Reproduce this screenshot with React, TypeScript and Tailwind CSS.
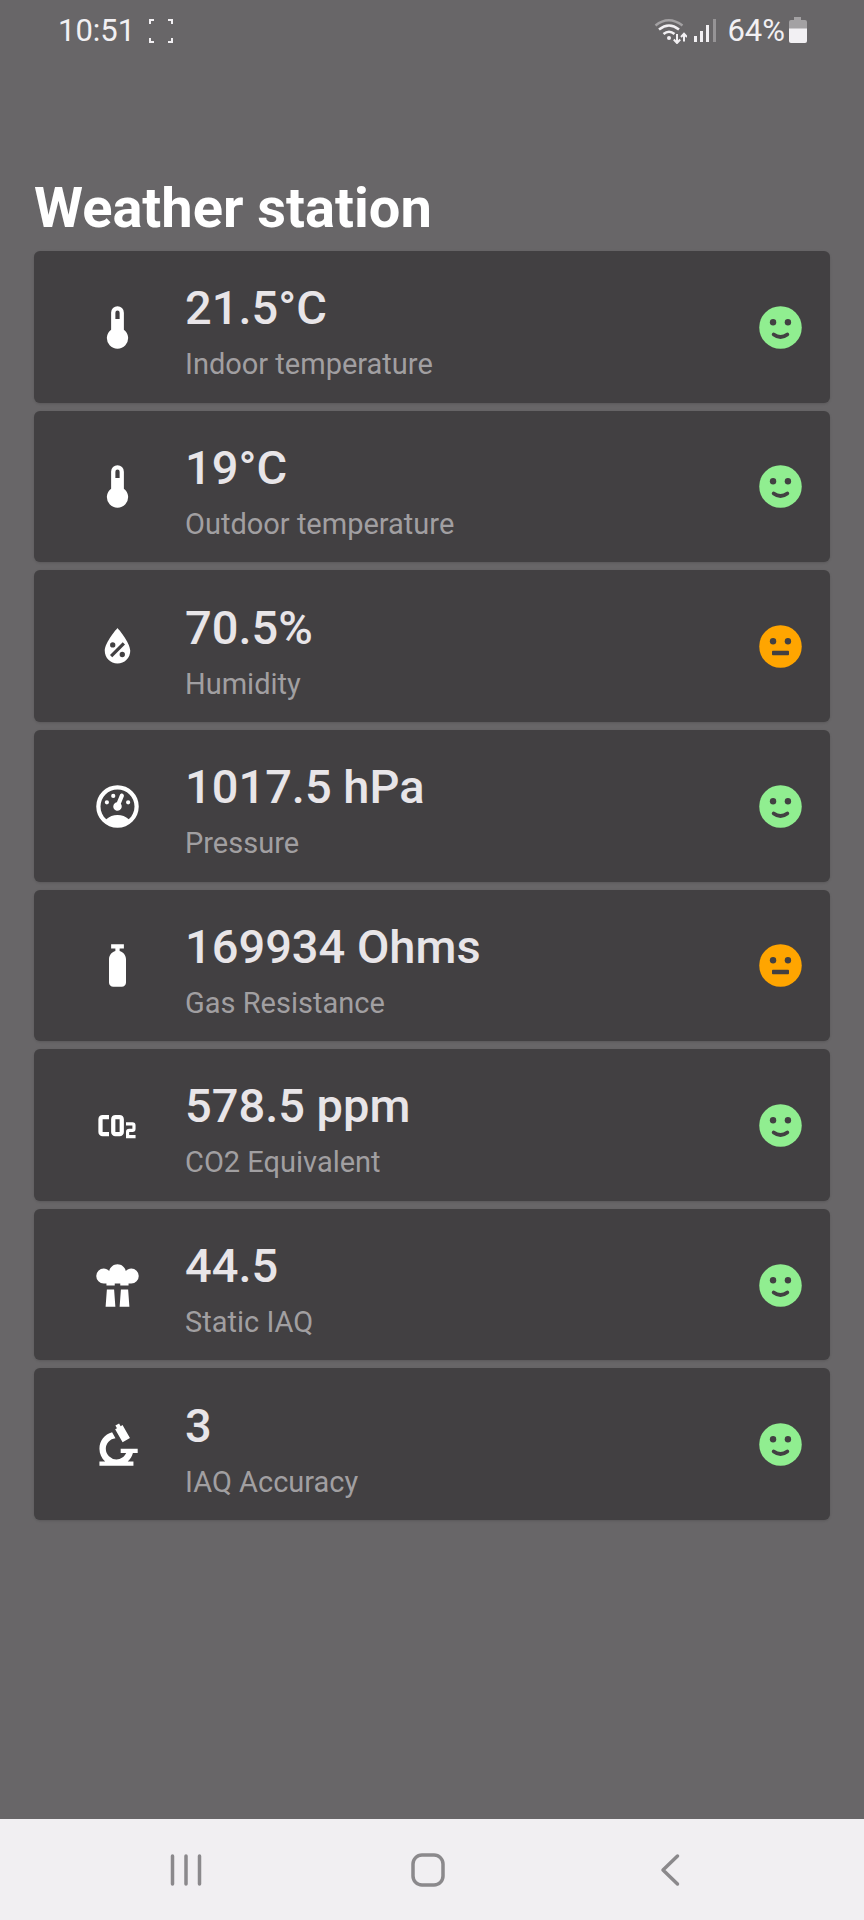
import type { ReactNode } from "react";

type Mood = "good" | "fair";

type Reading = {
  label: string;
  value: string;
  mood: Mood;
  icon: string;
};

const THERMOMETER =
  "M15 13V5A3 3 0 0 0 9 5V13A5 5 0 1 0 15 13M12 4A1 1 0 0 1 13 5V8H11V5A1 1 0 0 1 12 4Z";
const DROPLET =
  "M12,3.25C12,3.25 6,10 6,14C6,17.32 8.69,20 12,20A6,6 0 0,0 18,14C18,10 12,3.25 12,3.25M14.47,9.97L15.53,11.03L9.53,17.03L8.47,15.97M9.75,10A1.25,1.25 0 0,1 11,11.25A1.25,1.25 0 0,1 9.75,12.5A1.25,1.25 0 0,1 8.5,11.25A1.25,1.25 0 0,1 9.75,10M14.25,14.5A1.25,1.25 0 0,1 15.5,15.75A1.25,1.25 0 0,1 14.25,17A1.25,1.25 0 0,1 13,15.75A1.25,1.25 0 0,1 14.25,14.5Z";
const GAUGE =
  "M12,2A10,10 0 0,0 2,12A10,10 0 0,0 12,22A10,10 0 0,0 22,12A10,10 0 0,0 12,2M12,4A8,8 0 0,1 20,12C20,14.4 19,16.5 17.3,18C15.9,16.7 14,16 12,16C10,16 8.2,16.7 6.7,18C5,16.5 4,14.4 4,12A8,8 0 0,1 12,4M14,5.89C13.62,5.9 13.26,6.15 13.1,6.54L11.81,9.77L11.71,10C11,10.13 10.41,10.6 10.14,11.26C9.73,12.29 10.23,13.45 11.26,13.86C12.29,14.27 13.45,13.77 13.86,12.74C14.12,12.08 14,11.32 13.57,10.76L13.67,10.5L14.96,7.29L14.97,7.26C15.17,6.75 14.92,6.17 14.41,5.96C14.28,5.91 14.15,5.89 14,5.89M10,6A1,1 0 0,0 9,7A1,1 0 0,0 10,8A1,1 0 0,0 11,7A1,1 0 0,0 10,6M7,9A1,1 0 0,0 6,10A1,1 0 0,0 7,11A1,1 0 0,0 8,10A1,1 0 0,0 7,9M17,9A1,1 0 0,0 16,10A1,1 0 0,0 17,11A1,1 0 0,0 18,10A1,1 0 0,0 17,9Z";
const CYLINDER =
  "M16,9V20A2,2 0 0,1 14,22H10A2,2 0 0,1 8,20V9C8,7.14 9.27,5.57 11,5.13V4H9V2H15V4H13V5.13C14.73,5.57 16,7.14 16,9Z";
const CO2 =
  "M5,7A2,2 0 0,0 3,9V15A2,2 0 0,0 5,17H8V15H5V9H8V7H5M11,7A2,2 0 0,0 9,9V15A2,2 0 0,0 11,17H13A2,2 0 0,0 15,15V9A2,2 0 0,0 13,7H11M11,9H13V15H11V9M16,10.5V12H19V13.5H17.5A1.5,1.5 0 0,0 16,15V18H20.5V16.5H17.5V15H19A1.5,1.5 0 0,0 20.5,13.5V12A1.5,1.5 0 0,0 19,10.5H16Z";
const SMOKESTACKS =
  "M18.5,4C17.47,4 16.55,4.44 15.91,5.15C15.5,3.35 13.92,2 12,2C10.08,2 8.5,3.35 8.09,5.15C7.45,4.44 6.53,4 5.5,4A3.5,3.5 0 0,0 2,7.5A3.5,3.5 0 0,0 5.5,11H6.8V12H10.7V11H13.3V12H17.2V11H18.5A3.5,3.5 0 0,0 22,7.5A3.5,3.5 0 0,0 18.5,4M7,13.9H10.4L11,22H6.4ZM13.6,13.9H17L17.6,22H13Z";
const MICROSCOPE =
  "M9.46,6.28L11.05,9C8.47,9.26 6.5,11.41 6.5,14A5,5 0 0,0 11.5,19C13.55,19 15.31,17.77 16.08,16H13.5V14H21.5V16H19.25C18.84,17.57 17.97,18.96 16.79,20H19.5V22H3.5V20H6.21C4.55,18.53 3.5,16.39 3.5,14C3.5,10.37 5.96,7.2 9.46,6.28M12.74,2.07L13.5,3.37L14.36,2.87L17.86,8.93L14.39,10.93L10.89,4.87L11.76,4.37L11,3.07L12.74,2.07Z";

const readings: Reading[] = [
  { label: "Indoor temperature", value: "21.5°C", mood: "good", icon: THERMOMETER },
  { label: "Outdoor temperature", value: "19°C", mood: "good", icon: THERMOMETER },
  { label: "Humidity", value: "70.5%", mood: "fair", icon: DROPLET },
  { label: "Pressure", value: "1017.5 hPa", mood: "good", icon: GAUGE },
  { label: "Gas Resistance", value: "169934 Ohms", mood: "fair", icon: CYLINDER },
  { label: "CO2 Equivalent", value: "578.5 ppm", mood: "good", icon: CO2 },
  { label: "Static IAQ", value: "44.5", mood: "good", icon: SMOKESTACKS },
  { label: "IAQ Accuracy", value: "3", mood: "good", icon: MICROSCOPE },
];

function Face({ mood }: { mood: Mood }) {
  const good = mood === "good";
  return (
    <svg
      viewBox="0 0 24 24"
      role="img"
      aria-label={good ? "Good" : "Fair"}
      className="size-[51px] shrink-0"
    >
      <circle cx="12" cy="12" r="10" fill={good ? "#90ee90" : "#ffa500"} />
      <circle cx="8.5" cy="9.5" r="1.5" fill="#424042" />
      <circle cx="15.5" cy="9.5" r="1.5" fill="#424042" />
      {good ? (
        <path
          d="M8.8 15.3Q12 17.7 15.2 15.3"
          fill="none"
          stroke="#424042"
          strokeWidth="1.8"
          strokeLinecap="round"
        />
      ) : (
        <rect x="8" y="14" width="8" height="2.1" rx="0.4" fill="#424042" />
      )}
    </svg>
  );
}

function StatusBar() {
  return (
    <header className="flex items-center justify-between pt-[13px] pr-[57px] pl-[58px] text-[31px] leading-9 text-[#f2f0f3]">
      <div className="flex items-center gap-[14px]">
        <time>10:51</time>
        <svg viewBox="0 0 24 24" className="size-6" fill="none" stroke="currentColor" strokeWidth="2">
          <path d="M1 5V1H5M19 1H23V5M23 19V23H19M5 23H1V19" />
        </svg>
      </div>
      <div className="flex items-center">
        <svg viewBox="0 0 34 26" className="mr-1.5 h-[26px] w-[34px]" fill="none" stroke="currentColor">
          <path d="M2.5 7.5Q15.5 -3 29.5 7.5" stroke="#a3a1a3" strokeWidth="2.4" />
          <path d="M6 11.500Q16 3.500 26 11.500" strokeWidth="2.6" />
          <path d="M10.500 16Q16 11.500 21.500 16" strokeWidth="2.6" />
          <circle cx="16" cy="20" r="2" fill="currentColor" stroke="none" />
          <path d="M24 16V24M20.800 21.500L24 25L27.200 21.500" strokeWidth="2" />
          <path d="M31 23.500V16M28 19L31 15.800L34 19" strokeWidth="2" />
        </svg>
        <svg viewBox="0 0 24 26" className="mr-2.5 h-[26px] w-6" fill="currentColor">
          <rect x="1" y="18" width="3" height="6" />
          <rect x="7" y="13" width="3" height="11" />
          <rect x="13" y="7" width="3" height="17" />
          <rect x="20" y="1" width="3" height="23" fill="#969496" />
        </svg>
        <span>64%</span>
        <svg viewBox="0 0 18 28" className="ml-1 h-7 w-[18px]">
          <path d="M5 0H12V3H16Q18 3 18 5V12H0V5Q0 3 2 3H5Z" fill="#a3a1a3" />
          <path d="M0 11.500H18V24Q18 26 16 26H2Q0 26 0 24Z" fill="#f2f0f3" />
        </svg>
      </div>
    </header>
  );
}

function ReadingCard({ reading }: { reading: Reading }) {
  return (
    <li className="flex items-center rounded-md bg-[#424042] pt-px pr-6 pl-[58px] shadow-sm">
      <svg viewBox="0 0 24 24" aria-hidden="true" className="size-[51px] shrink-0 text-white">
        <path d={reading.icon} fill="currentColor" fillRule="evenodd" />
      </svg>
      <div className="ml-[42px] flex-1 pt-2">
        <p className="text-[47px] leading-[56px] font-medium text-[#e8e5e8]">{reading.value}</p>
        <p className="mt-[10px] text-[29px] leading-9 text-[#a19fa1]">{reading.label}</p>
      </div>
      <Face mood={reading.mood} />
    </li>
  );
}

function NavButton({ label, children }: { label: string; children: ReactNode }) {
  return (
    <button type="button" aria-label={label} className="flex h-full flex-1 items-center justify-center">
      <svg
        viewBox="0 0 36 36"
        className="size-9"
        fill="none"
        stroke="#8b898c"
        strokeWidth="3.5"
        strokeLinecap="round"
        strokeLinejoin="round"
      >
        {children}
      </svg>
    </button>
  );
}

export default function App() {
  return (
    <div className="flex min-h-screen flex-col bg-[#686668] font-[Roboto,sans-serif]">
      <StatusBar />
      <main className="flex flex-1 flex-col px-[34px] pt-[125px] pb-[299px]">
        <h1 className="mb-[9px] text-[56px] leading-[68px] font-bold text-white">Weather station</h1>
        <ul className="grid flex-1 auto-rows-fr gap-2">
          {readings.map((reading) => (
            <ReadingCard key={reading.label} reading={reading} />
          ))}
        </ul>
      </main>
      <nav className="flex h-[101px] items-center bg-[#f1eff2] pr-[73px] pl-[65px]">
        <NavButton label="Recent apps">
          <path d="M4.500 4V32M18 4V32M31.500 4V32" />
        </NavButton>
        <NavButton label="Home">
          <rect x="3" y="3" width="30" height="30" rx="9" />
        </NavButton>
        <NavButton label="Back">
          <path d="M25.500 4L11 18L25.500 32" />
        </NavButton>
      </nav>
    </div>
  );
}
